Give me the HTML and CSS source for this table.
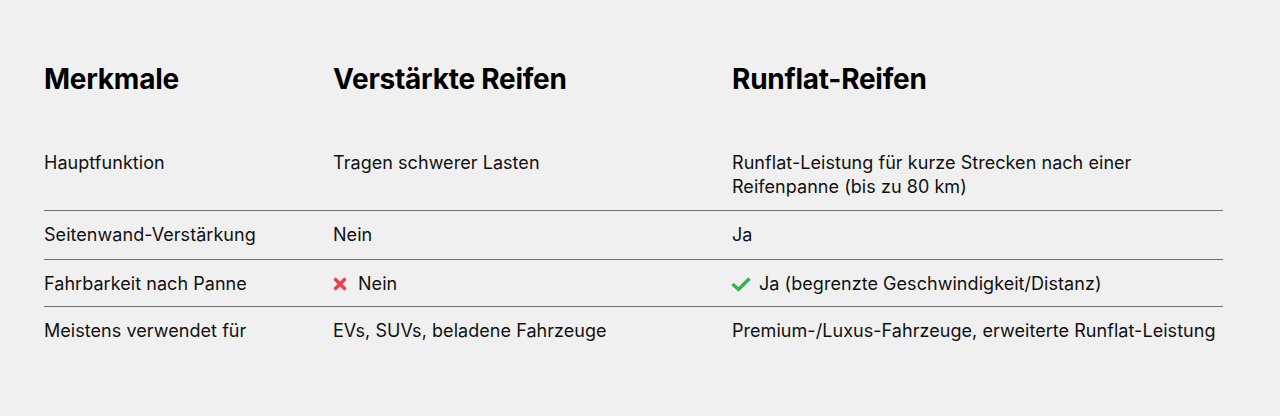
FILE: index.html
```html
<!DOCTYPE html>
<html lang="de">
<head>
<meta charset="utf-8">
<link rel="stylesheet" href="styles.css">
</head>
<body>
<section class="wrap">
  <table class="cmp">
    <colgroup>
      <col class="c1"><col class="c2"><col class="c3">
    </colgroup>
    <thead>
      <tr><th>Merkmale</th><th>Verstärkte Reifen</th><th>Runflat-Reifen</th></tr>
    </thead>
    <tbody>
      <tr><td>Hauptfunktion</td><td>Tragen schwerer Lasten</td><td>Runflat-Leistung für kurze Strecken nach einer<br>Reifenpanne (bis zu 80 km)</td></tr>
      <tr><td>Seitenwand-Verstärkung</td><td>Nein</td><td>Ja</td></tr>
      <tr class="icons"><td>Fahrbarkeit nach Panne</td>
        <td><div class="ic"><svg class="x" viewBox="0 0 14 14" width="14" height="14"><path d="M1.5 1.5 L12.5 12.5 M12.5 1.5 L1.5 12.5" stroke="#f23a48" stroke-width="3.2"/></svg>Nein</div></td>
        <td><div class="ic"><svg class="ok" viewBox="0 0 20 16" width="20" height="16"><path d="M1.5 8 L7.5 13.5 L18.5 2.5" fill="none" stroke="#2db84c" stroke-width="3.4"/></svg>Ja (begrenzte Geschwindigkeit/Distanz)</div></td></tr>
      <tr><td>Meistens verwendet für</td><td>EVs, SUVs, beladene Fahrzeuge</td><td>Premium-/Luxus-Fahrzeuge, erweiterte Runflat-Leistung</td></tr>
    </tbody>
  </table>
</section>
</body>
</html>
```
FILE: styles.css
```css
html, body {
  margin: 0;
  background: #f0f0f0;
}
body {
  font-family: Inter, Roboto, "Liberation Sans", sans-serif;
  color: #111;
}
.wrap {
  padding: 49px 57px 0 44px;
}
.cmp {
  width: 100%;
  border-collapse: collapse;
  table-layout: fixed;
}
.c1 { width: 289px; }
.c2 { width: 399px; }
.cmp th {
  text-align: left;
  font-size: 28px;
  line-height: 36px;
  font-weight: 700;
  color: #000;
  padding: 12px 0 42px;
  letter-spacing: -0.25px;
}
.cmp td {
  font-size: 18px;
  line-height: 24px;
  padding: 12px 0;
  vertical-align: top;
  letter-spacing: 0.05px;
}
.cmp tbody tr + tr td {
  border-top: 1px solid #707070;
}
.cmp tbody tr:first-child td {
  padding: 12px 0 11px;
}
.cmp tbody tr.icons td {
  padding-bottom: 10px;
}
.ic {
  display: flex;
  align-items: center;
  gap: 11px;
  height: 24px;
}
.ic svg { display: block; flex: none; }
.ic .ok { margin-left: -1px; margin-right: -3px; }
```
